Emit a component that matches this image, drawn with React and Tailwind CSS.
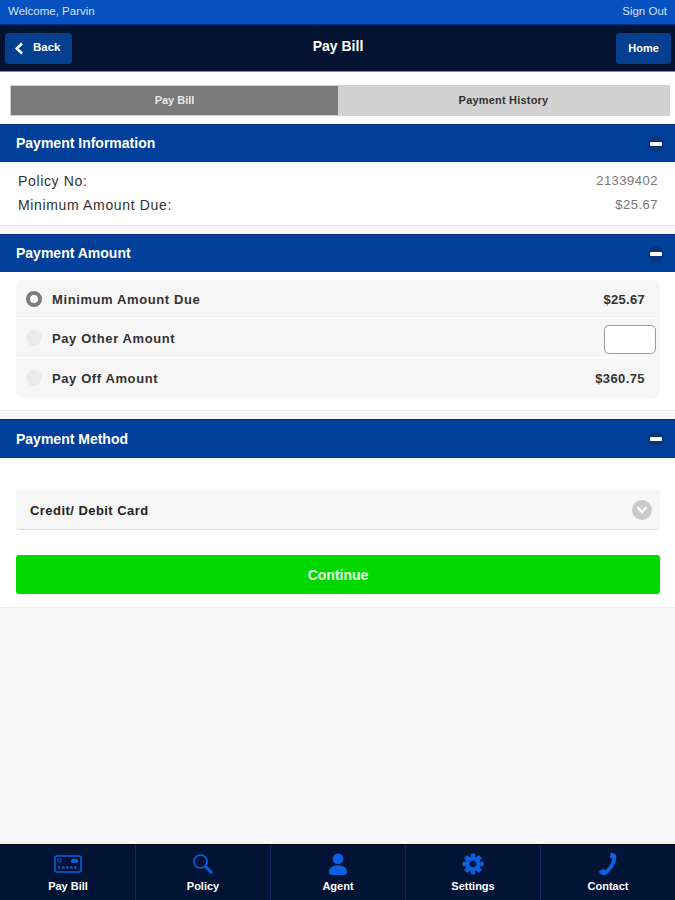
import React from "react";

const font = { fontFamily: '"Liberation Sans", Arial, sans-serif' };

function Header({ title, tall }) {
  return (
    <div className={`${tall ? "h-[39px]" : "h-[38px]"} bg-[#00409a] border-t border-[#0a2f8a] flex items-center justify-between pl-4 pr-[11px]`}>
      <span className="text-white font-bold text-[14px]">{title}</span>
      <span className="w-4 h-4 rounded-full bg-[#03367f] flex items-center justify-center">
        <span className="w-[12px] h-[4px] rounded-[1px] bg-white" />
      </span>
    </div>
  );
}

function Radio({ on }) {
  return on ? (
    <span className="-mt-[2px] w-4 h-4 rounded-full bg-white border-[4px] border-[#7c7c7c] shrink-0" />
  ) : (
    <span className="-mt-[2px] w-4 h-4 rounded-full bg-[#ebebeb] shrink-0" />
  );
}

function Row({ on, label, children, last }) {
  return (
    <div className={`${last ? "h-[40px]" : "h-[39px] border-b border-white"} pt-[2px] flex items-center pl-[10px] pr-[15px]`}>
      <Radio on={on} />
      <span className="ml-[10px] text-[13px] font-bold tracking-[0.6px] text-[#333] flex-1">{label}</span>
      {children}
    </div>
  );
}

const Tab = ({ label, icon }) => (
  <div className="flex-1 flex flex-col items-center justify-end pb-[7px] border-r border-[#0c2a5c] last:border-r-0">
    <div className="h-[24px] flex items-center justify-center">{icon}</div>
    <span className="mt-[4px] text-white font-bold text-[11px] leading-[13px]">{label}</span>
  </div>
);

const blue = "#0a60e0";

export default function App() {
  return (
    <div style={font} className="w-[675px] h-[900px] flex flex-col bg-[#f7f7f7] overflow-hidden">
      <div className="h-[25px] bg-[#0650bf] border-b border-[#03357f] flex items-center justify-between px-[8px] text-[11.5px] text-[#d5e3f7]">
        <span>Welcome, Parvin</span>
        <span>Sign Out</span>
      </div>

      <div className="h-[47px] bg-[#021230] border-b border-[#8a8f99] grid grid-cols-[1fr_auto_1fr] items-center pl-[5px] pr-[4px]">
        <div className="w-[67px] h-[31px] rounded-[3px] bg-[#04408f] flex items-center pl-[9px] gap-[9px]">
          <svg width="10" height="13" viewBox="0 0 10 13" fill="none" stroke="white" strokeWidth="2.6">
            <path d="M8 1.5 L2.8 6.5 L8 11.5" />
          </svg>
          <span className="text-white font-bold text-[11.5px]">Back</span>
        </div>
        <span className="text-white font-bold text-[14px] -mt-[3px]">Pay Bill</span>
        <div className="justify-self-end w-[55px] h-[31px] rounded-[3px] bg-[#04408f] flex items-center justify-center">
          <span className="text-white font-bold text-[11px]">Home</span>
        </div>
      </div>

      <div className="h-[52px] bg-white pl-[10px] pr-[5px] pt-[13px]">
        <div className="h-[31px] flex border border-[#d0d0d0] text-[11px] font-bold">
          <div className="w-[327px] bg-[#7a7a7a] text-[#e8e8e8] flex items-center justify-center">Pay Bill</div>
          <div className="flex-1 bg-[#d2d2d2] text-[#333] tracking-[0.2px] flex items-center justify-center">Payment History</div>
        </div>
      </div>

      <Header title="Payment Information" />
      <div className="h-[64px] bg-white border-b border-[#e4e4e4] pl-[18px] pr-[17px] pt-[7px] leading-[24px]">
        <div className="flex justify-between">
          <span className="text-[#333] text-[14px] tracking-[0.65px]">Policy No:</span>
          <span className="text-[#777] text-[13px] tracking-[0.5px]">21339402</span>
        </div>
        <div className="flex justify-between">
          <span className="text-[#333] text-[14px] tracking-[0.65px]">Minimum Amount Due:</span>
          <span className="text-[#777] text-[13px] tracking-[0.5px]">$25.67</span>
        </div>
      </div>

      <div className="h-[8px]" />
      <Header title="Payment Amount" />
      <div className="h-[139px] bg-white pl-4 pr-[15px] pt-[8px] border-b border-[#ececec]">
        <div className="rounded-[6px] bg-[#f6f6f6] overflow-hidden">
          <Row on label="Minimum Amount Due">
            <span className="text-[13px] font-bold tracking-[0.3px] text-[#333]">$25.67</span>
          </Row>
          <Row label="Pay Other Amount">
            <span className="w-[52px] h-[29px] -mr-[11px] rounded-[5px] bg-white border border-[#9a9a9a]" />
          </Row>
          <Row label="Pay Off Amount" last>
            <span className="text-[13px] font-bold tracking-[0.4px] text-[#333]">$360.75</span>
          </Row>
        </div>
      </div>

      <div className="h-[8px]" />
      <Header title="Payment Method" tall />
      <div className="h-[150px] bg-white pl-4 pr-[15px] pt-[32px] border-b border-[#ececec]">
        <div className="h-[40px] rounded-[4px] bg-[#f6f6f6] border-b border-[#dcdcdc] flex items-center justify-between pl-[14px] pr-[8px]">
          <span className="pt-[2px] text-[13px] font-bold text-[#222] tracking-[0.45px]">Credit/ Debit Card</span>
          <span className="w-[20px] h-[20px] rounded-full bg-[#c9c9c9] flex items-center justify-center">
            <svg width="12" height="10" viewBox="0 0 12 10" fill="none" stroke="white" strokeWidth="2.4">
              <path d="M1.5 2.2 L6 7 L10.5 2.2" />
            </svg>
          </span>
        </div>
        <div className="mt-[25px] h-[39px] pt-[2px] rounded-[3px] bg-[#00d900] flex items-center justify-center text-[#e4fbe4] font-bold text-[14px]">
          Continue
        </div>
      </div>

      <div className="flex-1" />

      <div className="h-[56px] bg-[#021435] border-t border-[#0a0a14] flex pl-[1px]">
        <Tab
          label="Pay Bill"
          icon={
            <svg width="28" height="18" viewBox="0 0 28 18" fill="none">
              <rect x="1" y="1" width="26" height="16" rx="2" stroke={blue} strokeWidth="1.6" />
              <rect x="17" y="4" width="7" height="4" rx="1.5" fill={blue} />
              <rect x="4" y="4" width="3" height="3" stroke={blue} strokeWidth="0.8" />
              <path d="M4 12.5 H24" stroke={blue} strokeWidth="2" strokeDasharray="2.5 1.5" />
            </svg>
          }
        />
        <Tab
          label="Policy"
          icon={
            <svg width="22" height="22" viewBox="0 0 22 22" fill="none" stroke={blue}>
              <circle cx="8.5" cy="8.5" r="6.5" strokeWidth="1.6" />
              <path d="M13.5 13.5 L20 20" strokeWidth="3" />
            </svg>
          }
        />
        <Tab
          label="Agent"
          icon={
            <svg width="20" height="22" viewBox="0 0 20 22" fill={blue}>
              <circle cx="10" cy="5.8" r="5.3" />
              <path d="M1 19 C1 14 4.5 12.5 10 12.5 C15.5 12.5 19 14 19 19 C19 21 17.5 22 16 22 H4 C2.5 22 1 21 1 19 Z" />
            </svg>
          }
        />
        <Tab
          label="Settings"
          icon={
            <svg width="22" height="22" viewBox="0 0 22 22">
              <g fill={blue}>
                <circle cx="11" cy="11" r="7.5" />
                <rect x="8.8" y="0.5" width="4.4" height="21" rx="0.8" />
                <rect x="8.8" y="0.5" width="4.4" height="21" rx="0.8" transform="rotate(45 11 11)" />
                <rect x="8.8" y="0.5" width="4.4" height="21" rx="0.8" transform="rotate(90 11 11)" />
                <rect x="8.8" y="0.5" width="4.4" height="21" rx="0.8" transform="rotate(135 11 11)" />
              </g>
              <circle cx="11" cy="11" r="3.2" fill="#021435" />
            </svg>
          }
        />
        <Tab
          label="Contact"
          icon={
            <svg width="20" height="24" viewBox="0 0 20 24" fill={blue}>
              <path d="M13.5 0.5 L17 2 C18 2.5 18.5 3.2 18.5 4.5 C18 12 13.5 19.5 7 23 C5.5 23.7 4.3 23.3 3.3 22.5 L1.5 20.8 C0.8 20 1 19.3 1.6 18.9 L4.6 17.2 C5.3 16.8 5.9 17 6.4 17.5 L7.3 18.5 C10.8 15.5 13.6 10.5 14.2 6.5 L12.6 6 C12 5.7 11.8 5.2 12 4.5 L12.7 1.1 C12.8 0.6 13.1 0.4 13.5 0.5 Z" />
            </svg>
          }
        />
      </div>
    </div>
  );
}
